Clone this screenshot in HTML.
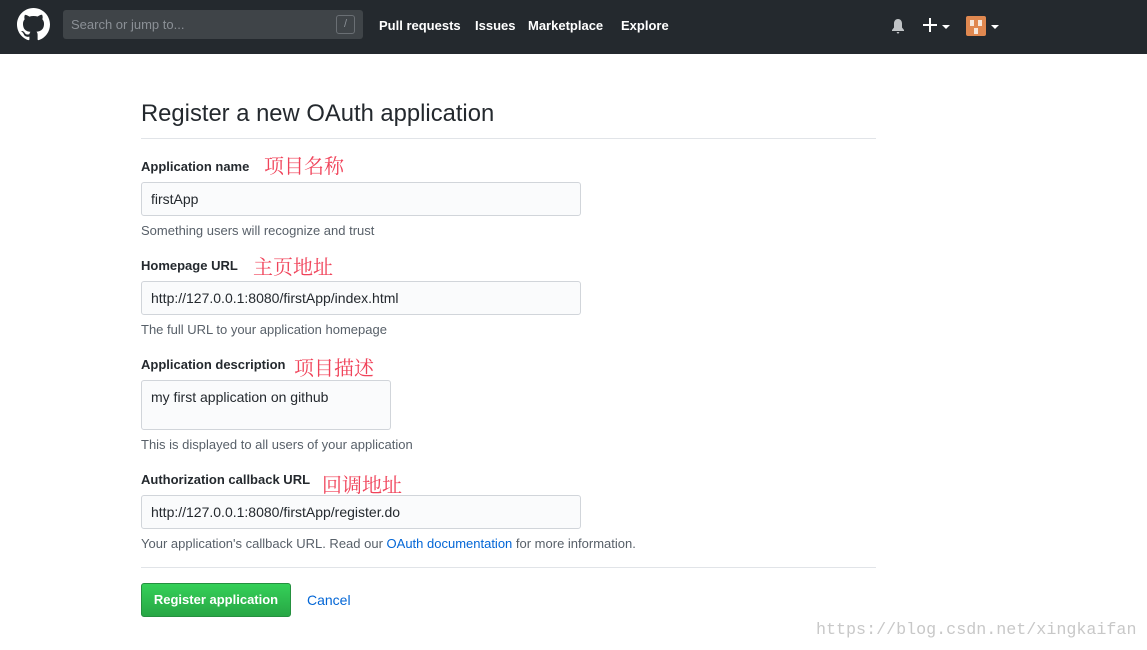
<!DOCTYPE html>
<html><head><meta charset="utf-8"><style>
*{margin:0;padding:0;box-sizing:border-box}
body{width:1147px;height:650px;background:#fff;font-family:"Liberation Sans",sans-serif;position:relative;overflow:hidden;color:#24292e}
.a{position:absolute;white-space:nowrap}
.hdr{position:absolute;left:0;top:0;width:1147px;height:54px;background:#24292e}
.nav{font-size:13px;font-weight:bold;color:#fff;top:18px}
.lbl{font-size:13px;font-weight:bold;color:#24292e}
.in{position:absolute;left:141px;width:440px;height:34px;background:#fafbfc;border:1px solid #d1d5da;border-radius:3px;font-size:14px;padding:8px 9px;color:#24292e}
.note{font-size:13px;color:#586069}
.cn{font-family:"Noto Serif CJK SC",serif;font-size:20px;color:#f0435a;z-index:2}
</style></head><body>
<div class="hdr"></div>
<svg class="a" style="left:17px;top:8px" width="33" height="33" viewBox="0 0 16 16"><path fill="#fff" d="M8 0C3.58 0 0 3.58 0 8c0 3.540 2.290 6.530 5.470 7.590.4.07.55-.17.55-.38v-1.33c-2.23.48-2.7-1.070-2.7-1.070-.36-.93-.89-1.170-.89-1.170-.73-.5.05-.49.05-.49.8.06 1.230.83 1.230.83.72 1.220 1.870.87 2.330.66.07-.52.28-.87.51-1.070-1.780-.2-3.640-.89-3.640-3.950 0-.87.31-1.590.82-2.150-.08-.2-.36-1.020.08-2.120 0 0 .67-.21 2.2.82A7.700 7.700 0 0 1 8 3.860c.68 0 1.360.09 2 .27 1.530-1.040 2.2-.82 2.2-.82.44 1.100.16 1.920.08 2.120.51.56.82 1.270.82 2.150 0 3.070-1.870 3.750-3.650 3.950.29.25.54.73.54 1.480v2.200c0 .21.15.46.55.38A8 8 0 0 0 16 8c0-4.420-3.580-8-8-8z"/></svg>
<div class="a" style="left:63px;top:10px;width:300px;height:29px;background:#3f4448;border-radius:3px"></div>
<div class="a" style="left:71px;top:17px;font-size:13px;color:#8b9096">Search or jump to...</div>
<div class="a" style="left:336px;top:15px;width:19px;height:19px;border:1px solid #6a6f74;border-radius:3px;color:#8b9096;font-size:11px;text-align:center;line-height:17px">/</div>
<div class="a nav" style="left:379px">Pull requests</div>
<div class="a nav" style="left:475px">Issues</div>
<div class="a nav" style="left:528px">Marketplace</div>
<div class="a nav" style="left:621px">Explore</div>
<svg class="a" style="left:890px;top:18px" width="16" height="17" viewBox="0 0 16 17"><path fill="#c0c3c6" d="M8 1c-2.5 0-4 2-4 4.5v4L2 12v1h12v-1l-2-2.5v-4C12 3 10.5 1 8 1zM6.5 14h3l-1.5 2z"/></svg>
<div class="a" style="left:923px;top:24px;width:14px;height:2px;background:#fff"></div>
<div class="a" style="left:929px;top:18px;width:2px;height:14px;background:#fff"></div>
<div class="a" style="left:942px;top:25px;border:4px solid transparent;border-top:4px solid #fff"></div>
<div class="a" style="left:966px;top:16px;width:20px;height:20px;background:#e08850;border-radius:2px"></div>
<div class="a" style="left:970px;top:20px;width:4px;height:6px;background:#f6e8dc"></div>
<div class="a" style="left:978px;top:20px;width:4px;height:6px;background:#f6e8dc"></div>
<div class="a" style="left:974px;top:28px;width:4px;height:6px;background:#f6e8dc"></div>
<div class="a" style="left:991px;top:25px;border:4px solid transparent;border-top:4px solid #fff"></div>

<div class="a" style="left:141px;top:100px;font-size:23.8px;color:#24292e">Register a new OAuth application</div>
<div class="a" style="left:141px;top:138px;width:735px;height:1px;background:#e1e4e8"></div>

<div class="a lbl" style="left:141px;top:159px">Application name</div>
<div class="a cn" style="left:264px;top:150px">项目名称</div>
<div class="in" style="top:182px">firstApp</div>
<div class="a note" style="left:141px;top:223px">Something users will recognize and trust</div>

<div class="a lbl" style="left:141px;top:258px">Homepage URL</div>
<div class="a cn" style="left:253px;top:251px">主页地址</div>
<div class="in" style="top:281px">http://127.0.0.1:8080/firstApp/index.html</div>
<div class="a note" style="left:141px;top:322px">The full URL to your application homepage</div>

<div class="a lbl" style="left:141px;top:357px">Application description</div>
<div class="a cn" style="left:294px;top:352px">项目描述</div>
<div class="in" style="top:380px;width:250px;height:50px">my first application on github</div>
<div class="a note" style="left:141px;top:437px">This is displayed to all users of your application</div>

<div class="a lbl" style="left:141px;top:472px">Authorization callback URL</div>
<div class="in" style="top:495px">http://127.0.0.1:8080/firstApp/register.do</div>
<div class="a cn" style="left:322px;top:469px">回调地址</div>
<div class="a note" style="left:141px;top:536px">Your application's callback URL. Read our <span style="color:#0366d6">OAuth documentation</span> for more information.</div>

<div class="a" style="left:141px;top:567px;width:735px;height:1px;background:#e1e4e8"></div>
<div class="a" style="left:141px;top:583px;width:150px;height:34px;background:linear-gradient(#34d058,#28a745);border:1px solid #25903f;border-radius:3px;color:#fff;font-weight:bold;font-size:13px;text-align:center;line-height:32px">Register application</div>
<div class="a" style="left:307px;top:592px;font-size:14px;color:#0366d6">Cancel</div>
<div class="a" style="left:816px;top:621px;font-family:'Liberation Mono',monospace;font-size:16.7px;color:#c8c8c8">https://blog.csdn.net/xingkaifan</div>
</body></html>
